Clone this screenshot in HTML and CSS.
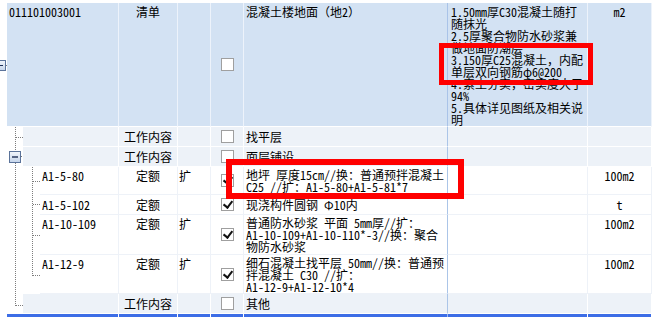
FILE: index.html
```html
<!DOCTYPE html>
<html lang="zh-CN">
<head>
  <meta charset="UTF-8" />
  <meta name="viewport" content="width=device-width, initial-scale=1.0"/>
  <title>清单定额</title>
  <link rel="stylesheet" href="styles.css">
</head>
<body>
  <div class="sheet">

    <!-- 清单 -->
    <div class="row lv0 bill r1">
      <div class="gut"></div>
      <div class="c code">011101003001</div>
      <div class="c type">清单</div>
      <div class="c ext"></div>
      <div class="c chk"><span class="box"></span></div>
      <div class="c name">混凝土楼地面（地2）</div>
      <div class="c desc">1.50mm厚C30混凝土随打随抹光<br>2.5厚聚合物防水砂浆兼做地面防潮层<br>3.150厚C25混凝土，内配单层双向钢筋φ6@200<br>4.素土夯实，密实度大于94%<br>5.具体详见图纸及相关说明</div>
      <div class="c unit">m2</div>
    </div>

    <div class="row lv1 work r2">
      <div class="gut"></div>
      <div class="c code"></div>
      <div class="c type">工作内容</div>
      <div class="c ext"></div>
      <div class="c chk"><span class="box"></span></div>
      <div class="c name">找平层</div>
      <div class="c desc"></div>
      <div class="c unit"></div>
    </div>

    <div class="row lv1 work r2">
      <div class="gut"></div>
      <div class="c code"></div>
      <div class="c type">工作内容</div>
      <div class="c ext"></div>
      <div class="c chk"><span class="box"></span></div>
      <div class="c name">面层铺设</div>
      <div class="c desc"></div>
      <div class="c unit"></div>
    </div>

    <!-- 定额 -->
    <div class="row lv2 quota r4">
      <div class="gut"></div>
      <div class="c code">A1-5-80</div>
      <div class="c type">定额</div>
      <div class="c ext">扩</div>
      <div class="c chk"><span class="box on"></span></div>
      <div class="c name">地坪 厚度15cm//换：普通预拌混凝土C25 //扩：<span class="nb">A1-5-80+A1-5-81*7</span></div>
      <div class="c desc"></div>
      <div class="c unit">100m2</div>
    </div>

    <div class="row lv2 quota r2">
      <div class="gut"></div>
      <div class="c code">A1-5-102</div>
      <div class="c type">定额</div>
      <div class="c ext"></div>
      <div class="c chk"><span class="box on"></span></div>
      <div class="c name">现浇构件圆钢 Φ10内</div>
      <div class="c desc"></div>
      <div class="c unit">t</div>
    </div>

    <div class="row lv2 quota r6">
      <div class="gut"></div>
      <div class="c code">A1-10-109</div>
      <div class="c type">定额</div>
      <div class="c ext">扩</div>
      <div class="c chk"><span class="box on"></span></div>
      <div class="c name">普通防水砂浆 平面 5mm厚//扩：<span class="nb">A1-10-109+A1-10-110*-3//</span>换：聚合物防水砂浆</div>
      <div class="c desc"></div>
      <div class="c unit">100m2</div>
    </div>

    <div class="row lv2 quota r7">
      <div class="gut"></div>
      <div class="c code">A1-12-9</div>
      <div class="c type">定额</div>
      <div class="c ext">扩</div>
      <div class="c chk"><span class="box on"></span></div>
      <div class="c name">细石混凝土找平层 50mm//换：普通预拌混凝土 C30 //扩：<span class="nb">A1-12-9+A1-12-10*4</span></div>
      <div class="c desc"></div>
      <div class="c unit">100m2</div>
    </div>

    <div class="row lv1 work r2">
      <div class="gut"></div>
      <div class="c code"></div>
      <div class="c type">工作内容</div>
      <div class="c ext"></div>
      <div class="c chk"><span class="box"></span></div>
      <div class="c name">其他</div>
      <div class="c desc"></div>
      <div class="c unit"></div>
    </div>

    <!-- selected row, only its top edge is in view -->
    <div class="row lv0 sel">
      <div class="gut"></div>
      <div class="c code"></div>
      <div class="c type"></div>
      <div class="c ext"></div>
      <div class="c chk"></div>
      <div class="c name"></div>
      <div class="c desc"></div>
      <div class="c unit"></div>
    </div>

    <!-- tree lines -->
    <svg class="tree" width="40" height="317" viewBox="0 0 40 317">
      <g stroke="#7d7d7d" stroke-width="1" stroke-dasharray="1 1" fill="none">
        <line x1="6" y1="65.5" x2="8" y2="65.5"/>
        <line x1="15.5" y1="127" x2="15.5" y2="306"/>
        <line x1="16" y1="137.5" x2="23" y2="137.5"/>
        <line x1="21" y1="156.5" x2="23" y2="156.5"/>
        <line x1="16" y1="305.5" x2="23" y2="305.5"/>
        <line x1="32.5" y1="167" x2="32.5" y2="276"/>
        <line x1="33" y1="181.5" x2="40" y2="181.5"/>
        <line x1="33" y1="204.5" x2="40" y2="204.5"/>
        <line x1="33" y1="235.5" x2="40" y2="235.5"/>
        <line x1="33" y1="275.5" x2="40" y2="275.5"/>
      </g>
      <defs>
        <linearGradient id="btn" x1="0" y1="0" x2="0" y2="1">
          <stop offset="0" stop-color="#f3f7fc"/>
          <stop offset="1" stop-color="#c4d4ea"/>
        </linearGradient>
      </defs>
      <rect x="-4.5" y="60.5" width="10" height="10" fill="url(#btn)" stroke="#5b739a"/>
      <line x1="-2" y1="65.5" x2="3" y2="65.5" stroke="#1e2f55"/>
      <rect x="9.5" y="151.5" width="11" height="11" fill="url(#btn)" stroke="#5b739a"/>
      <line x1="12" y1="157" x2="18" y2="157" stroke="#1e2f55" stroke-width="1.4"/>
    </svg>

    <!-- red annotation boxes -->
    <div class="mark mark-desc"></div>
    <div class="mark mark-name"></div>
  </div>
</body>
</html>
```

FILE: styles.css
```css
* {
  box-sizing: border-box;
  margin: 0;
  padding: 0;
}

body {
  width: 652px;
  height: 317px;
  overflow: hidden;
  background-color: #fff;
  font-family: "Noto Sans Mono CJK SC", "Noto Sans CJK SC", "Liberation Mono", monospace;
  font-size: 12px;
  line-height: 12px;
  color: #000;
}

.sheet {
  position: relative;
  padding-top: 3px;
}

.row {
  display: grid;
  grid-template-columns: var(--gut) 1fr 59px 33px 33px 204px 140px 64px;
}

.lv0 { --gut: 7px; }
.lv1 { --gut: 23px; }
.lv2 { --gut: 40px; }

.r1 { height: 124px; }
.r2 { height: 20px; }
.r4 { height: 28px; }
.r6 { height: 40px; }
.r7 { height: 39px; }

.gut {
  background-color: #fff;
}

.c {
  padding: 3px 0 0 2px;
  border-right: 1px solid #eef2f8;
  border-bottom: 1px solid #eef2f8;
  overflow: hidden;
}

.c.name {
  border-right-color: #abc5e8;
}

.nb {
  white-space: nowrap;
}

.type {
  text-align: center;
  padding-left: 0;
}

.ext {
  padding-left: 1px;
}

.unit {
  text-align: center;
  padding-left: 0;
}

.chk {
  display: flex;
  align-items: center;
  justify-content: center;
  padding: 0 0 0 1px;
}

.box {
  position: relative;
  width: 13px;
  height: 13px;
  border: 1px solid #9f9f9f;
  background-color: #fff;
}

.box.on::after {
  content: "";
  position: absolute;
  left: 3px;
  top: 0;
  width: 4px;
  height: 7px;
  border: solid #111;
  border-width: 0 2px 2px 0;
  transform: rotate(38deg);
}

.bill .c {
  background-color: #d3e2f3;
  border-right-color: #edf3fb;
  border-bottom-color: #fff;
}

.bill .c.name {
  border-right-color: #a9c3e8;
}

.bill .chk {
  padding-top: 0;
}

.work .c {
  background-color: #edf2f8;
  border-right-color: #fff;
  border-bottom-color: #fff;
  padding-top: 4px;
}

.work .c.name {
  border-right-color: #abc5e8;
}

.work .chk {
  padding-top: 0;
}

.quota .c {
  background-color: #fff;
}

.quota .c.name {
  padding-top: 2px;
}

.quota.r2 .c {
  padding-top: 4px;
}

.quota .chk,
.quota.r2 .chk {
  padding-top: 0;
}

.desc {
  padding-left: 3px;
}

.sel {
  height: 3px;
}

.sel .c {
  background-color: #3c6de6;
  border-right-color: #fff;
  border-bottom: none;
}

.sel .c.name {
  border-right-color: #9cb8ee;
}

.tree {
  position: absolute;
  left: 0;
  top: 0;
  overflow: visible;
}

.mark {
  position: absolute;
  border: 5px solid #f00;
}

.mark-desc {
  left: 439px;
  top: 43px;
  width: 154px;
  height: 42px;
}

.mark-name {
  left: 226px;
  top: 159px;
  width: 238px;
  height: 40px;
  border-width: 6px;
}
```
